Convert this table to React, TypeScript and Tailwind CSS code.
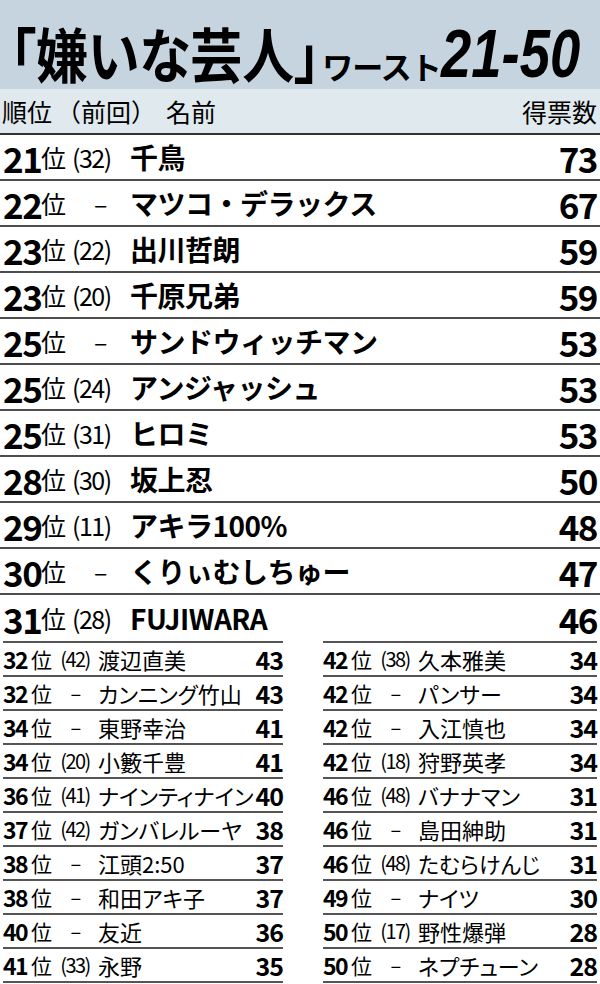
import React from 'react';

type Row = { rank: string; prev: string; name: string; votes: string };

const BIG: Row[] = [
  { rank: '21', prev: '(32)', name: '千鳥', votes: '73' },
  { rank: '22', prev: '–', name: 'マツコ・デラックス', votes: '67' },
  { rank: '23', prev: '(22)', name: '出川哲朗', votes: '59' },
  { rank: '23', prev: '(20)', name: '千原兄弟', votes: '59' },
  { rank: '25', prev: '–', name: 'サンドウィッチマン', votes: '53' },
  { rank: '25', prev: '(24)', name: 'アンジャッシュ', votes: '53' },
  { rank: '25', prev: '(31)', name: 'ヒロミ', votes: '53' },
  { rank: '28', prev: '(30)', name: '坂上忍', votes: '50' },
  { rank: '29', prev: '(11)', name: 'アキラ100%', votes: '48' },
  { rank: '30', prev: '–', name: 'くりぃむしちゅー', votes: '47' },
  { rank: '31', prev: '(28)', name: 'FUJIWARA', votes: '46' },
];

const LEFT: Row[] = [
  { rank: '32', prev: '(42)', name: '渡辺直美', votes: '43' },
  { rank: '32', prev: '–', name: 'カンニング竹山', votes: '43' },
  { rank: '34', prev: '–', name: '東野幸治', votes: '41' },
  { rank: '34', prev: '(20)', name: '小籔千豊', votes: '41' },
  { rank: '36', prev: '(41)', name: 'ナインティナイン', votes: '40' },
  { rank: '37', prev: '(42)', name: 'ガンバレルーヤ', votes: '38' },
  { rank: '38', prev: '–', name: '江頭2:50', votes: '37' },
  { rank: '38', prev: '–', name: '和田アキ子', votes: '37' },
  { rank: '40', prev: '–', name: '友近', votes: '36' },
  { rank: '41', prev: '(33)', name: '永野', votes: '35' },
];

const RIGHT: Row[] = [
  { rank: '42', prev: '(38)', name: '久本雅美', votes: '34' },
  { rank: '42', prev: '–', name: 'パンサー', votes: '34' },
  { rank: '42', prev: '–', name: '入江慎也', votes: '34' },
  { rank: '42', prev: '(18)', name: '狩野英孝', votes: '34' },
  { rank: '46', prev: '(48)', name: 'バナナマン', votes: '31' },
  { rank: '46', prev: '–', name: '島田紳助', votes: '31' },
  { rank: '46', prev: '(48)', name: 'たむらけんじ', votes: '31' },
  { rank: '49', prev: '–', name: 'ナイツ', votes: '30' },
  { rank: '50', prev: '(17)', name: '野性爆弾', votes: '28' },
  { rank: '50', prev: '–', name: 'ネプチューン', votes: '28' },
];

const jp = { fontFamily: '"Noto Sans CJK JP", "Noto Sans", sans-serif' };

function BigRow({ r, last }: { r: Row; last: boolean }) {
  return (
    <div className={`flex items-center h-[46px] pl-[3px] pr-[3px] ${last ? '' : 'border-b-2 border-[#4d4d4d]'}`}>
      <span className="w-[38px] text-[35px] font-bold leading-none tracking-[-1.5px]">{r.rank}</span>
      <span className="w-[29px] text-[25px] leading-none">位</span>
      <span
        className={`w-[60px] text-[25px] leading-none tracking-[-1.5px] ${r.prev === '–' ? 'text-center' : 'pl-[2px]'}`}
      >
        {r.prev}
      </span>
      <span className="flex-1 text-[28px] font-bold leading-none tracking-[-0.5px]">{r.name}</span>
      <span className="text-[35px] font-bold leading-none tracking-[-1.5px]">{r.votes}</span>
    </div>
  );
}

function SmallRow({ r, last }: { r: Row; last: boolean }) {
  return (
    <div className={`flex items-center border-t-2 border-[#555] ${last ? 'border-b-2 h-[36px]' : 'h-[34px]'}`}>
      <span className="w-[28px] text-[23px] font-bold leading-none tracking-[-1.5px]">{r.rank}</span>
      <span className="w-[21px] text-[21px] leading-none">位</span>
      <span className="w-[46px] text-[20px] leading-none tracking-[-1.5px] text-center">{r.prev}</span>
      <span className="flex-1 text-[22px] leading-none whitespace-nowrap [font-feature-settings:'palt']">
        {r.name}
      </span>
      <span className="text-[25px] font-bold leading-none tracking-[-1px]">{r.votes}</span>
    </div>
  );
}

export default function App() {
  return (
    <div className="w-[600px] h-[984px] bg-white text-black overflow-hidden" style={jp}>
      <div className="h-[89px] bg-[#c6d4df] flex items-end pb-[6px] pl-[10px] whitespace-nowrap">
        <span className="text-[52px] font-bold leading-none inline-block scale-y-[1.14] origin-bottom [font-feature-settings:'palt']">
          「嫌いな芸人」
        </span>
        <span className="text-[31px] font-bold leading-none mb-[2px] ml-[2px] tracking-[-1px]">ワースト</span>
        <span
          className="text-[68px] font-bold italic leading-none inline-block scale-x-[0.8] origin-left -mb-[4px]"
          style={{ fontFamily: '"Liberation Sans", Arial, sans-serif' }}
        >
          21-50
        </span>
      </div>
      <div className="h-[46px] bg-[#e0e9ed] border-b-2 border-[#333] flex items-center pl-[2px] pr-[3px] text-[25px] leading-none">
        <span>順位</span>
        <span className="ml-[4px]">（前回）</span>
        <span className="ml-[10px]">名前</span>
        <span className="ml-auto">得票数</span>
      </div>
      <div>
        {BIG.map((r, i) => (
          <BigRow key={i} r={r} last={i === BIG.length - 1} />
        ))}
      </div>
      <div className="flex pl-[3px]">
        <div className="w-[280px]">
          {LEFT.map((r, i) => (
            <SmallRow key={i} r={r} last={i === LEFT.length - 1} />
          ))}
        </div>
        <div className="w-[274px] ml-[40px]">
          {RIGHT.map((r, i) => (
            <SmallRow key={i} r={r} last={i === RIGHT.length - 1} />
          ))}
        </div>
      </div>
    </div>
  );
}
